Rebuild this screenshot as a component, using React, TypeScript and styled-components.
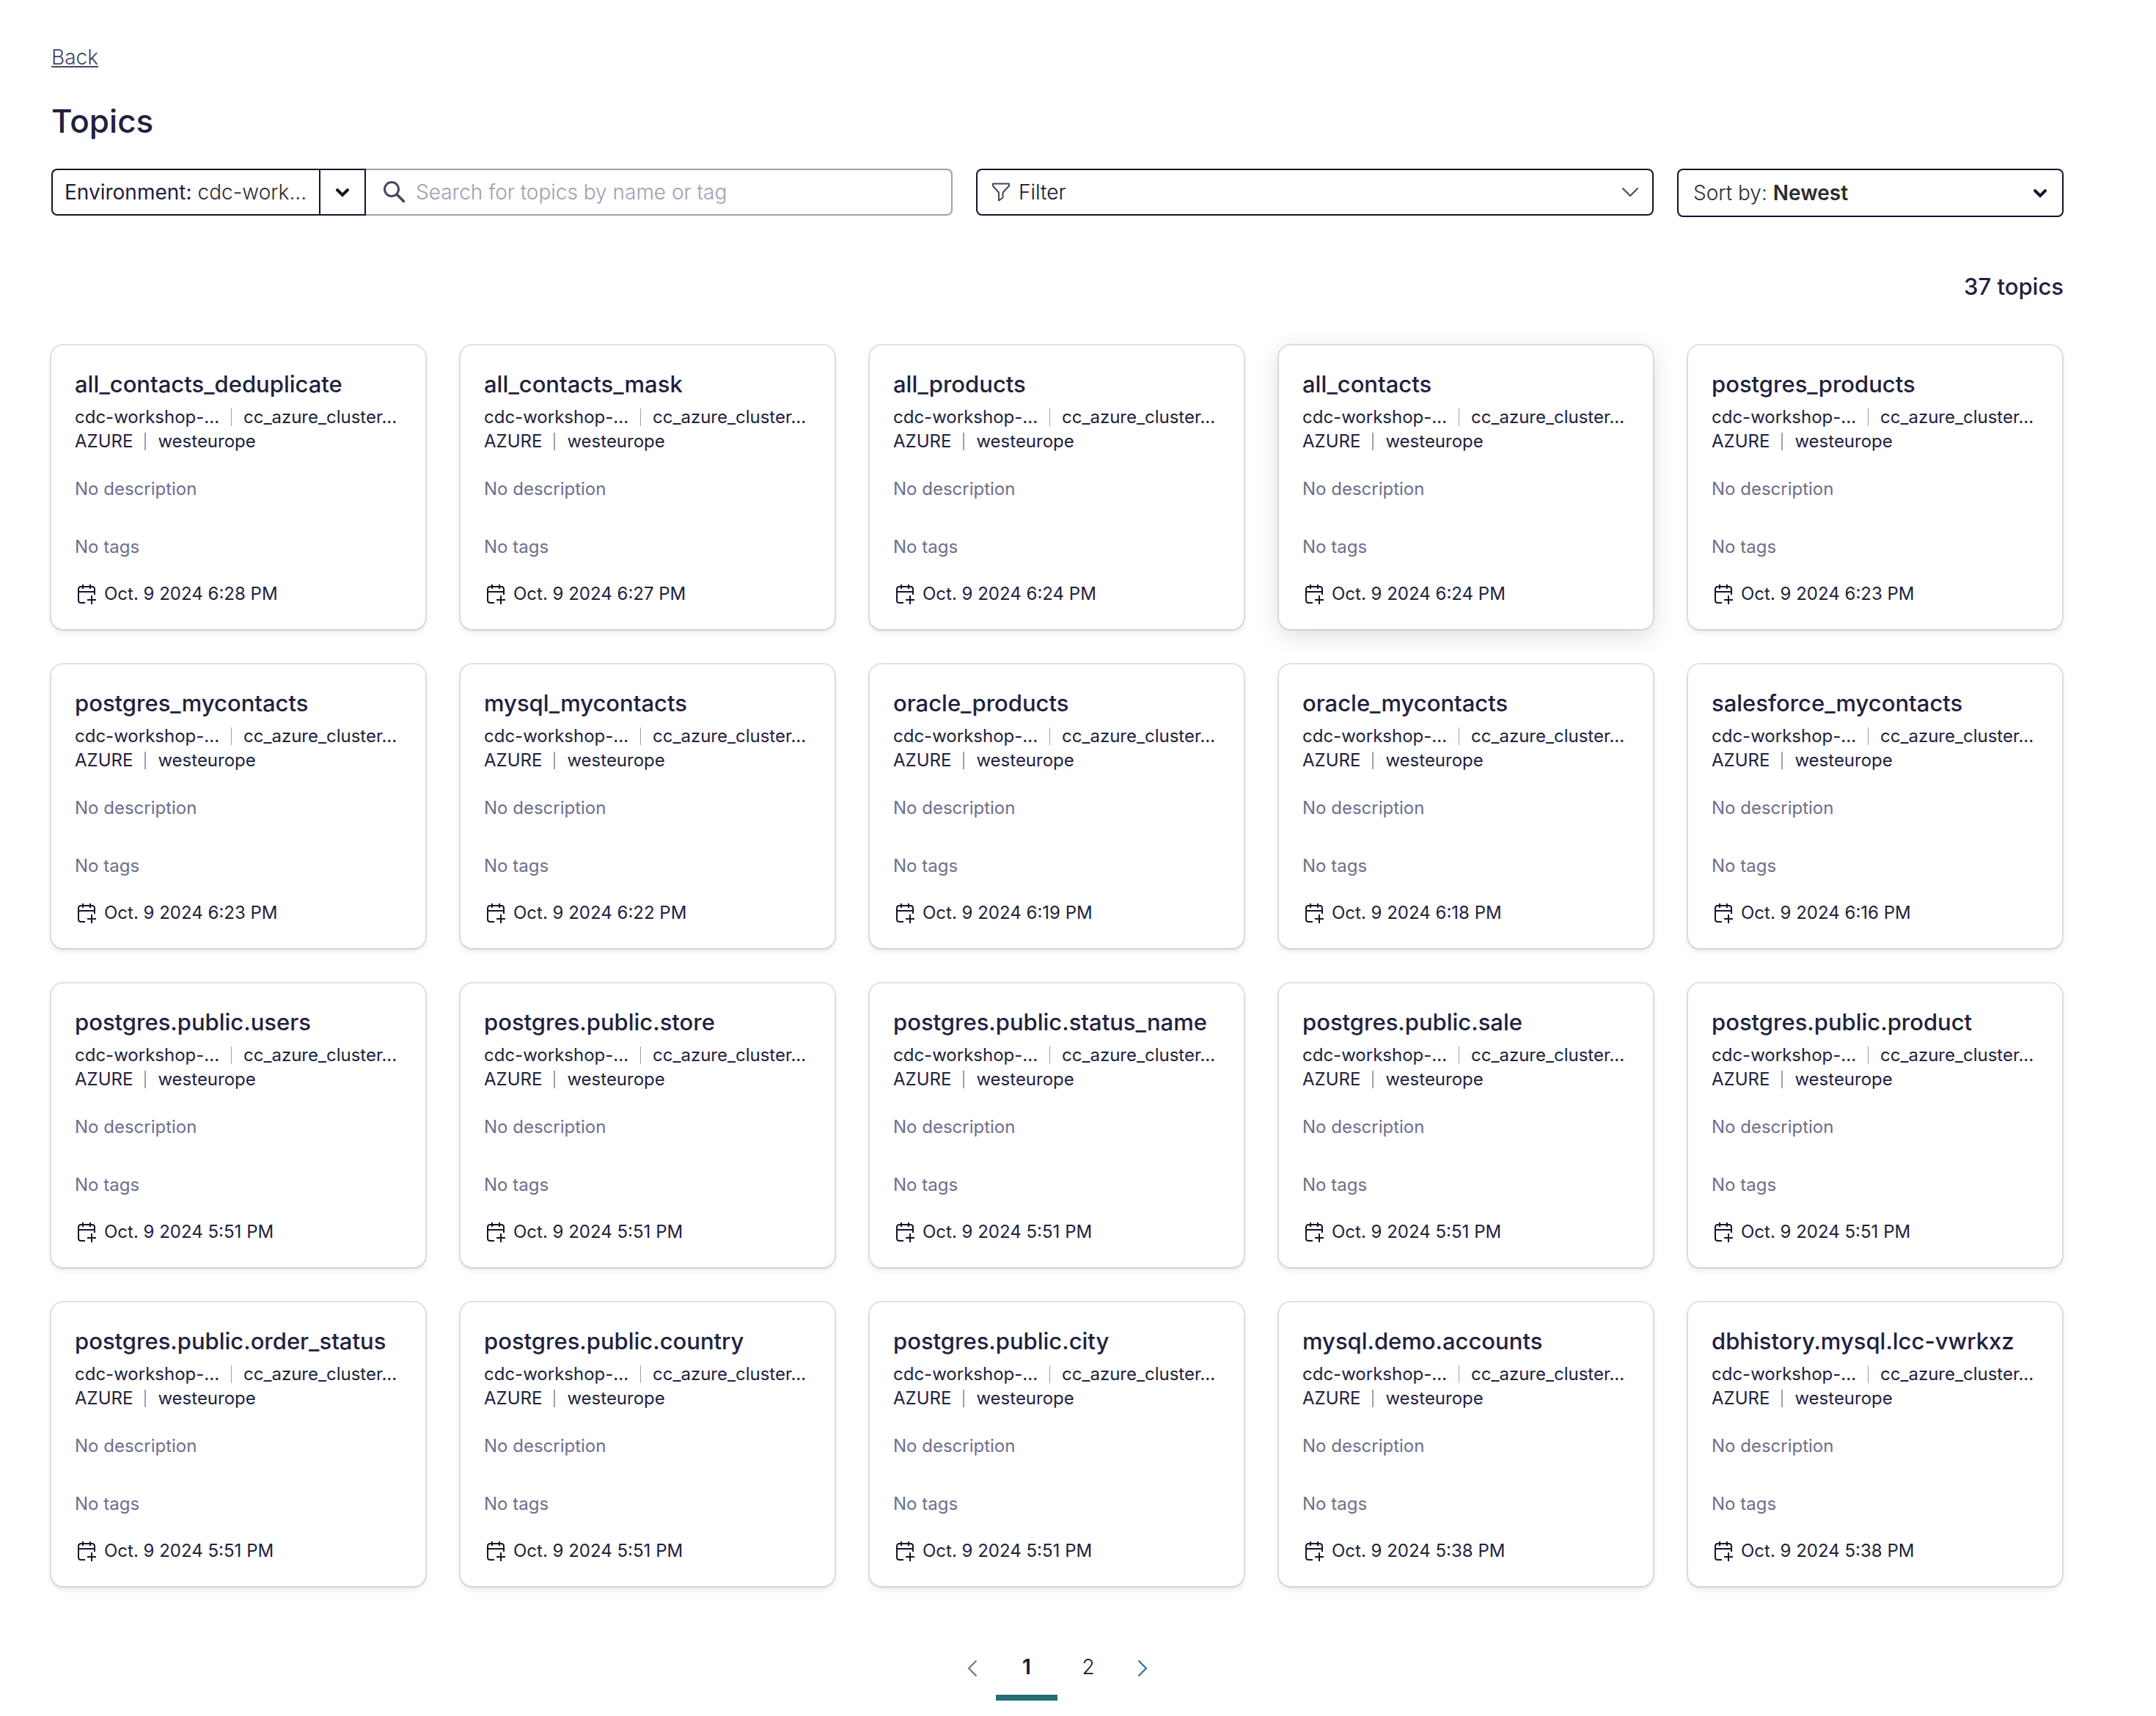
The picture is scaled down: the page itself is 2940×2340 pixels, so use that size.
import React from "react";
import styled, { createGlobalStyle } from "styled-components";

const ink = "#21213d";
const line = "#14142b";
const muted = "#6e6e8c";
const pale = "#a09eb1";

const GlobalStyle = createGlobalStyle`
  *, *::before, *::after { box-sizing: border-box; }
  body { margin: 0; background: #fff; }
  body, button, input, select { font-family: Inter, "Liberation Sans", sans-serif; }
  h1, h2, p, ul { margin: 0; padding: 0; }
  ul { list-style: none; }
`;

const Page = styled.main`
  display: flex;
  flex-direction: column;
  padding: 60px 126px 0 70px;
  color: ${ink};
`;

const BackLink = styled.a`
  align-self: flex-start;
  font-size: 28px;
  line-height: 36px;
  font-weight: 300;
  color: #45455f;
  text-decoration: underline;
  text-decoration-thickness: 2px;
  text-underline-offset: 2px;
`;

const Title = styled.h1`
  margin-top: 37px;
  font-size: 44px;
  line-height: 64px;
  font-weight: 500;
`;

const Toolbar = styled.div`
  display: grid;
  grid-template-columns: 1229fr 924fr 527fr;
  align-items: start;
  gap: 32px;
  margin-top: 33px;
`;

const SearchGroup = styled.div`
  display: flex;
  height: 64px;
`;

const EnvironmentButton = styled.button`
  display: flex;
  align-items: center;
  gap: 8px;
  width: 365px;
  padding: 0 0 0 16px;
  border: 2px solid ${line};
  border-right: 0;
  border-radius: 8px 0 0 8px;
  background: #fff;
  font-size: 28px;
  font-weight: 400;
  color: ${ink};
  white-space: nowrap;
`;

const EnvironmentValue = styled.span`
  font-weight: 300;
  color: #2c2c2c;
`;

const ChevronButton = styled.button`
  display: flex;
  align-items: center;
  justify-content: center;
  width: 64px;
  padding: 0;
  border: 2px solid ${line};
  background: #fff;
`;

const SearchBox = styled.label`
  display: flex;
  flex: 1;
  align-items: center;
  gap: 14px;
  padding: 0 24px;
  border: 2px solid ${pale};
  border-left: 0;
  border-radius: 0 8px 8px 0;
`;

const SearchInput = styled.input`
  flex: 1;
  min-width: 0;
  padding: 0;
  border: 0;
  outline: 0;
  background: transparent;
  font-size: 28px;
  font-weight: 300;
  color: ${ink};
  &::placeholder { color: ${pale}; opacity: 1; }
`;

const FilterButton = styled.button`
  display: flex;
  align-items: center;
  gap: 10px;
  height: 64px;
  padding: 0 18px;
  border: 2px solid ${line};
  border-radius: 8px;
  background: #fff;
  font-size: 28px;
  font-weight: 300;
  color: ${line};
`;

const FilterLabel = styled.span`
  flex: 1;
  text-align: left;
`;

const SortBox = styled.label`
  display: flex;
  align-items: center;
  gap: 8px;
  height: 66px;
  padding: 0 20px;
  border: 2px solid ${line};
  border-radius: 8px;
  font-size: 28px;
  font-weight: 300;
  color: #2c2c2c;
  white-space: nowrap;
`;

const SortSelect = styled.select`
  flex: 1;
  min-width: 0;
  padding: 0;
  border: 0;
  outline: 0;
  appearance: none;
  background: transparent;
  font-size: 28px;
  font-weight: 600;
  color: #2c2c2c;
`;

const Count = styled.p`
  align-self: flex-end;
  margin-top: 75px;
  font-size: 31px;
  line-height: 40px;
  font-weight: 500;
`;

const Grid = styled.ul`
  display: grid;
  grid-template-columns: repeat(5, 1fr);
  gap: 48px;
  margin: 60px 2px 0 0;
`;

const Card = styled.li<{ $raised?: boolean }>`
  display: flex;
  flex-direction: column;
  padding: 33px 32px 32px;
  border-radius: 16px;
  background: #fff;
  box-shadow: ${(p) =>
    p.$raised
      ? "0 0 0 2px rgba(0, 0, 0, 0.1), 0 8px 32px rgba(0, 0, 0, 0.14)"
      : "0 0 0 2px rgba(0, 0, 0, 0.1), 0 4px 8px rgba(0, 0, 0, 0.1)"};
`;

const CardTitle = styled.h2`
  margin-bottom: 8px;
  font-size: 31px;
  line-height: 40px;
  font-weight: 500;
  white-space: nowrap;
`;

const MetaRow = styled.p`
  display: flex;
  gap: 16px;
  font-size: 24px;
  line-height: 33px;
  white-space: nowrap;
`;

const Divider = styled.span<{ $width: number }>`
  align-self: center;
  width: ${(p) => p.$width}px;
  height: 24px;
  background: ${pale};
`;

const Note = styled.p`
  margin-top: 33px;
  font-size: 24px;
  line-height: 32px;
  color: ${muted};
  & + & { margin-top: 47px; }
`;

const Created = styled.p`
  display: flex;
  align-items: center;
  gap: 10px;
  margin-top: 32px;
  font-size: 24px;
  line-height: 32px;
`;

const Pager = styled.nav`
  display: flex;
  align-items: stretch;
  justify-content: center;
  height: 80px;
  margin-top: 76px;
`;

const PageButton = styled.button<{ $current?: boolean }>`
  width: 84px;
  padding: 0 0 4px;
  border: 0;
  border-bottom: 8px solid ${(p) => (p.$current ? "#266e76" : "transparent")};
  background: transparent;
  font-size: 28px;
  font-weight: ${(p) => (p.$current ? 600 : 300)};
  color: ${line};
`;

const ArrowButton = styled.button`
  display: flex;
  align-items: center;
  justify-content: center;
  width: 64px;
  padding: 0 0 8px;
  border: 0;
  background: transparent;
`;

const BoldChevron = () => (
  <svg width="20" height="14" viewBox="0 0 20 14" fill="none" aria-hidden="true">
    <path d="M3 4l7 7 7-7" stroke={line} strokeWidth="4" strokeLinecap="round" />
  </svg>
);

const ThinChevron = () => (
  <svg width="24" height="14" viewBox="0 0 24 14" fill="none" aria-hidden="true">
    <path d="M2 2l10 10L22 2" stroke="#45455f" strokeWidth="2" strokeLinecap="round" />
  </svg>
);

const SearchIcon = () => (
  <svg width="30" height="30" viewBox="0 0 30 30" fill="none" stroke="#45455f" aria-hidden="true">
    <circle cx="11" cy="11" r="9.5" strokeWidth="3" />
    <path d="M17.500 17.500L28.500 28.500" strokeWidth="3.6" />
  </svg>
);

const FilterIcon = () => (
  <svg width="28" height="28" viewBox="0 0 28 28" fill="none" aria-hidden="true">
    <path
      d="M3 2.500h22v3l-8.500 9v7l-5.500 4V14.500L3 5.500z"
      stroke="#45455f"
      strokeWidth="2"
      strokeLinejoin="round"
    />
  </svg>
);

const CalendarIcon = () => (
  <svg width="30" height="30" viewBox="0 0 30 30" fill="none" stroke={line} strokeWidth="2" aria-hidden="true">
    <path d="M14 27H8.500c-2 0-3.500-1.500-3.500-3.500V8.500C5 6.500 6.500 5 8.500 5h15c2 0 3.500 1.500 3.500 3.500V16M5 12h22M11 2v6M21 2v6M17 23h12M23 17v12" />
  </svg>
);

const Arrow = ({ next }: { next?: boolean }) => (
  <svg width="14" height="24" viewBox="0 0 14 24" fill="none" aria-hidden="true">
    <path
      d={next ? "M1.500 1.500L12 12 1.500 22.500" : "M12.500 1.500L2 12l10.500 10.500"}
      stroke={next ? "#256a9a" : muted}
      strokeWidth="2"
    />
  </svg>
);

const topics: [string, string][] = [
  ["all_contacts_deduplicate", "6:28"],
  ["all_contacts_mask", "6:27"],
  ["all_products", "6:24"],
  ["all_contacts", "6:24"],
  ["postgres_products", "6:23"],
  ["postgres_mycontacts", "6:23"],
  ["mysql_mycontacts", "6:22"],
  ["oracle_products", "6:19"],
  ["oracle_mycontacts", "6:18"],
  ["salesforce_mycontacts", "6:16"],
  ["postgres.public.users", "5:51"],
  ["postgres.public.store", "5:51"],
  ["postgres.public.status_name", "5:51"],
  ["postgres.public.sale", "5:51"],
  ["postgres.public.product", "5:51"],
  ["postgres.public.order_status", "5:51"],
  ["postgres.public.country", "5:51"],
  ["postgres.public.city", "5:51"],
  ["mysql.demo.accounts", "5:38"],
  ["dbhistory.mysql.lcc-vwrkxz", "5:38"],
];

export default function App() {
  return (
    <>
      <GlobalStyle />
      <Page>
        <BackLink href="#back">Back</BackLink>
        <Title>Topics</Title>
        <Toolbar>
          <SearchGroup>
            <EnvironmentButton type="button">
              <span>Environment:</span>
              <EnvironmentValue>cdc-work...</EnvironmentValue>
            </EnvironmentButton>
            <ChevronButton type="button" aria-label="Choose environment">
              <BoldChevron />
            </ChevronButton>
            <SearchBox>
              <SearchIcon />
              <SearchInput
                type="text"
                aria-label="Search topics"
                placeholder="Search for topics by name or tag"
              />
            </SearchBox>
          </SearchGroup>
          <FilterButton type="button">
            <FilterIcon />
            <FilterLabel>Filter</FilterLabel>
            <ThinChevron />
          </FilterButton>
          <SortBox>
            Sort by:
            <SortSelect defaultValue="Newest">
              <option>Newest</option>
            </SortSelect>
            <BoldChevron />
          </SortBox>
        </Toolbar>
        <Count>37 topics</Count>
        <Grid>
          {topics.map(([name, time]) => (
            <Card key={name} $raised={name === "all_contacts"}>
              <CardTitle>{name}</CardTitle>
              <MetaRow>
                <span>cdc-workshop-...</span>
                <Divider $width={1} />
                <span>cc_azure_cluster...</span>
              </MetaRow>
              <MetaRow>
                <span>AZURE</span>
                <Divider $width={2} />
                <span>westeurope</span>
              </MetaRow>
              <Note>No description</Note>
              <Note>No tags</Note>
              <Created>
                <CalendarIcon />
                Oct. 9 2024 {time} PM
              </Created>
            </Card>
          ))}
        </Grid>
        <Pager aria-label="Pages">
          <ArrowButton type="button" aria-label="Previous page">
            <Arrow />
          </ArrowButton>
          <PageButton type="button" $current aria-current="page">1</PageButton>
          <PageButton type="button">2</PageButton>
          <ArrowButton type="button" aria-label="Next page">
            <Arrow next />
          </ArrowButton>
        </Pager>
      </Page>
    </>
  );
}
